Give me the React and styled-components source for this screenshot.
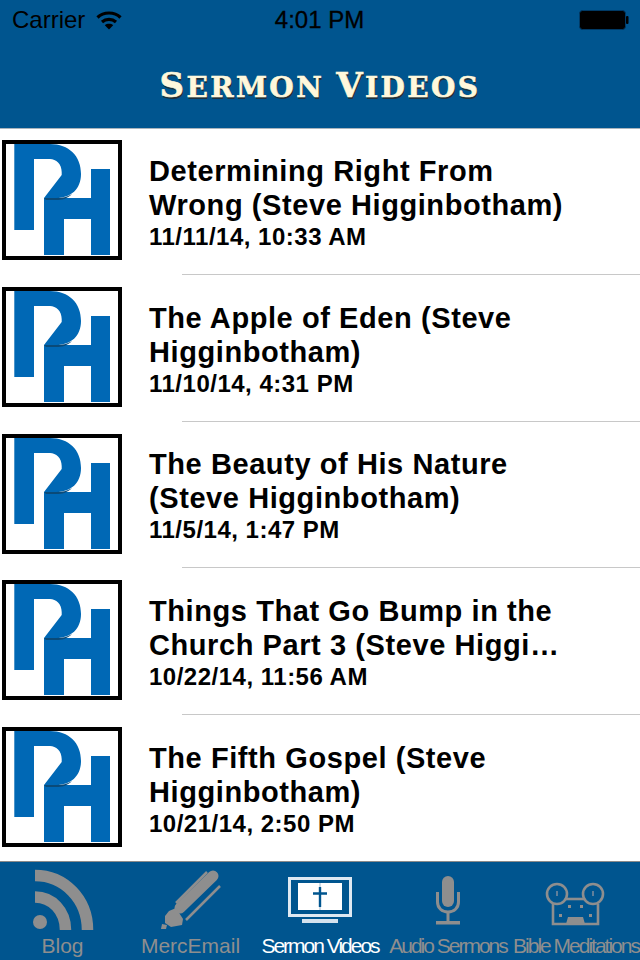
import React from "react";
import styled, { createGlobalStyle } from "styled-components";

const Global = createGlobalStyle`
  html, body { margin: 0; padding: 0; background: #fff; }
  * { box-sizing: border-box; }
`;

const Screen = styled.div`
  width: 640px;
  height: 960px;
  display: flex;
  flex-direction: column;
  overflow: hidden;
  font-family: "Liberation Sans", Arial, sans-serif;
  background: #fff;
`;

const Header = styled.header`
  height: 129px;
  flex: none;
  background: #00558f;
  border-bottom: 1px solid #a9b4bd;
  display: flex;
  flex-direction: column;
`;

const StatusBar = styled.div`
  height: 40px;
  padding: 0 12px 0 12px;
  display: grid;
  grid-template-columns: 1fr auto 1fr;
  align-items: center;
  font-size: 24px;
  color: #000;
`;

const StatusLeft = styled.div`
  display: flex;
  align-items: center;
  gap: 11px;
`;

const StatusRight = styled.div`
  display: flex;
  justify-content: flex-end;
  margin-right: -1px;
`;

const Time = styled.div`
  -webkit-text-stroke: 0.3px #000;
  margin-left: -1px;
`;

const NavBar = styled.div`
  flex: 1;
  display: flex;
  align-items: center;
  justify-content: center;
  padding-top: 4px;
`;

const NavTitle = styled.h1`
  margin: 0;
  font-family: "DejaVu Serif", serif;
  font-weight: 700;
  font-size: 28px;
  line-height: 40px;
  letter-spacing: 2.4px;
  text-transform: uppercase;
  color: #fff8dc;
  -webkit-text-stroke: 0.6px #fff8dc;
  text-shadow: 1px 2px 0 #22303a;
`;

const TitleCap = styled.span`
  font-size: 34px;
`;

const List = styled.div`
  flex: 1;
  min-height: 0;
  overflow: hidden;
`;

const Row = styled.div`
  height: 145.1px;
  display: flex;
  align-items: flex-start;
  padding: 11.3px 0 0 2px;
  gap: 27px;
`;

const Divider = styled.div`
  height: 1px;
  margin: 0 0 0.57px 182px;
  background: #c8c8c8;
`;

const Thumb = styled.div`
  width: 120px;
  height: 120px;
  flex: none;
  border: 4px solid #000;
  background: #fff;
  svg { display: block; }
`;

const RowText = styled.div`
  width: 440px;
  padding-top: 13.7px;
`;

const RowTitle = styled.div`
  width: 420px;
  font-size: 29px;
  line-height: 34px;
  font-weight: 700;
  color: #000;
  letter-spacing: 0.58px;
`;

const RowDate = styled.div`
  margin-top: 1px;
  font-size: 24px;
  line-height: 28px;
  font-weight: 700;
  color: #000;
  letter-spacing: 0.5px;
`;

const TabBar = styled.nav`
  height: 99px;
  flex: none;
  background: #00558f;
  border-top: 1px solid #8a8a8a;
  display: grid;
  grid-template-columns: repeat(5, 128px);
`;

const Tab = styled.div`
  display: flex;
  flex-direction: column;
  align-items: center;
  padding-top: 2px;
  color: ${p => (p.$active ? "#fff" : "#8e8e8e")};
  svg { display: block; flex: none; }
`;

const TabLabel = styled.div`
  font-size: 21px;
  line-height: 24px;
  white-space: nowrap;
  letter-spacing: ${p => p.$ls || 0}px;
  margin: 4px ${p => p.$nudge || 0}px 0 0;
`;

const Logo = () => (
  <svg width="112" height="112" viewBox="0 0 112 112">
    <path d="M8.3 0H44C63 0 75 12 75 30C75 45 65 54 50 54H38L55.7 31V28C55.7 20 50 15 44 15H28V86H8.3Z" fill="#0068b5" />
    <path d="M38 54H85V25H104V111H85V75H58V111H38Z" fill="#0068b5" />
    <path d="M38 54H50C56 54 61 53 66 50C61 55 56 56 50 56H40Z" fill="#0a4a78" />
  </svg>
);

const Wifi = () => (
  <svg width="26" height="20" viewBox="0 0 26 20" fill="none" stroke="#000" strokeWidth="3.2">
    <path d="M1.5 7.5C7.5 1.5 18.5 1.5 24.5 7.5" />
    <path d="M6 12C10 8.5 16 8.5 20 12" />
    <path d="M13 19.5L8.8 15.2C11 13.4 15 13.4 17.2 15.2Z" fill="#000" stroke="none" />
  </svg>
);

const Battery = () => (
  <svg width="50" height="20" viewBox="0 0 50 20">
    <rect x="0.5" y="0.5" width="46" height="19" rx="3" fill="#000" stroke="#003a66" />
    <rect x="47" y="6" width="2.5" height="8" rx="1" fill="#000" />
  </svg>
);

const TabIcon = ({ x, children }) => (
  <svg width="128" height="66" viewBox={`${x} 864 128 66`}>{children}</svg>
);

const RssIcon = () => (
  <TabIcon x={0}>
    <g fill="none" stroke="#8e8e8e" strokeWidth="11.5">
      <path d="M35 875.5C64 875.5 87.5 899 87.5 930" />
      <path d="M35 897C52 897 65.5 911 65.5 930" />
    </g>
    <circle cx="40" cy="922" r="7" fill="#8e8e8e" />
  </TabIcon>
);

const PencilIcon = () => (
  <TabIcon x={128}>
    <g fill="none" stroke="#8e8e8e">
      <path d="M180 908L213 876" strokeWidth="11" strokeLinecap="round" />
      <path d="M176 903L207 872" strokeWidth="2.5" />
      <path d="M186 920L220 886" strokeWidth="2.5" />
    </g>
    <path d="M169 911L176 908L183 919L182 925L171 927L165 923L165 916Z" fill="#8e8e8e" />
    <path d="M162 924L167 925L166 929L161 929Z" fill="#8e8e8e" />
  </TabIcon>
);

const MonitorIcon = () => (
  <TabIcon x={256}>
    <rect x="289.5" y="878.5" width="61" height="37" fill="none" stroke="#dfe9f2" strokeWidth="3" />
    <rect x="298" y="883" width="44" height="27" fill="#fff" />
    <rect x="319" y="883" width="2" height="27" fill="#cfdce8" />
    <path d="M320 887V907M313 893.5H327" stroke="#00558f" strokeWidth="2.4" fill="none" />
    <rect x="302" y="919" width="36" height="4" fill="#d5e2ee" />
  </TabIcon>
);

const MicIcon = () => (
  <TabIcon x={384}>
    <rect x="442" y="876" width="12" height="31" rx="6" fill="#8e8e8e" />
    <path d="M437.5 892V902C437.5 908 442 912 448 912C454 912 458.5 908 458.5 902V892" fill="none" stroke="#8e8e8e" strokeWidth="3" />
    <rect x="446.5" y="911" width="3" height="11" fill="#8e8e8e" />
    <rect x="436" y="921" width="24" height="3.5" fill="#8e8e8e" />
  </TabIcon>
);

const ReelIcon = () => (
  <TabIcon x={512}>
    <g fill="none" stroke="#8e8e8e" strokeWidth="2.6">
      <circle cx="557" cy="894" r="10" />
      <circle cx="593" cy="894" r="10" />
      <path d="M553 904V924H598V904" />
      <path d="M566 899H584" />
    </g>
    <g fill="#8e8e8e">
      <rect x="568" y="905" width="3" height="3" />
      <rect x="580" y="905" width="3" height="3" />
      <rect x="559" y="914" width="3" height="3" />
      <rect x="589" y="914" width="3" height="3" />
      <path d="M568 917H583L585 924H566Z" />
    </g>
    <g fill="#5f7f9b">
      <rect x="556" y="891" width="2" height="5" />
      <rect x="592" y="891" width="2" height="5" />
    </g>
  </TabIcon>
);

const rows = [
  { title: "Determining Right From Wrong (Steve Higginbotham)", date: "11/11/14, 10:33 AM" },
  { title: "The Apple of Eden (Steve Higginbotham)", date: "11/10/14, 4:31 PM" },
  { title: "The Beauty of His Nature (Steve Higginbotham)", date: "11/5/14, 1:47 PM" },
  { title: "Things That Go Bump in the Church Part 3 (Steve Higgi…", date: "10/22/14, 11:56 AM" },
  { title: "The Fifth Gospel (Steve Higginbotham)", date: "10/21/14, 2:50 PM" },
];

const tabs = [
  { label: "Blog", Icon: RssIcon, nudge: 3 },
  { label: "MercEmail", Icon: PencilIcon, nudge: 3 },
  { label: "Sermon Videos", Icon: MonitorIcon, active: true, ls: -2 },
  { label: "Audio Sermons", Icon: MicIcon, ls: -2 },
  { label: "Bible Meditations", Icon: ReelIcon, ls: -2 },
];

export default function App() {
  return (
    <Screen>
      <Global />
      <Header>
        <StatusBar>
          <StatusLeft>Carrier <Wifi /></StatusLeft>
          <Time>4:01 PM</Time>
          <StatusRight><Battery /></StatusRight>
        </StatusBar>
        <NavBar>
          <NavTitle><TitleCap>S</TitleCap>ermon <TitleCap>V</TitleCap>ideos</NavTitle>
        </NavBar>
      </Header>
      <List>
        {rows.map((r, i) => (
          <React.Fragment key={r.date}>
            {i > 0 && <Divider />}
            <Row>
              <Thumb><Logo /></Thumb>
              <RowText>
                <RowTitle>{r.title}</RowTitle>
                <RowDate>{r.date}</RowDate>
              </RowText>
            </Row>
          </React.Fragment>
        ))}
      </List>
      <TabBar>
        {tabs.map(({ label, Icon, active, ls, nudge }) => (
          <Tab key={label} $active={active}>
            <Icon />
            <TabLabel $ls={ls} $nudge={nudge}>{label}</TabLabel>
          </Tab>
        ))}
      </TabBar>
    </Screen>
  );
}
